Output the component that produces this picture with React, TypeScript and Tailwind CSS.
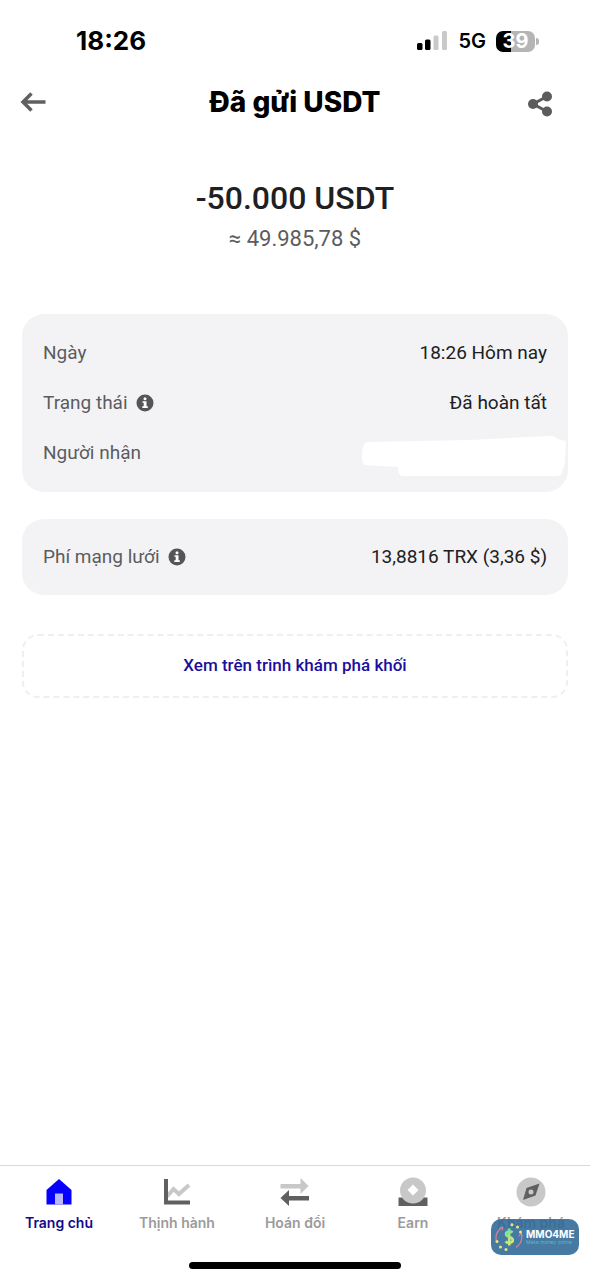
import { ReactNode } from 'react';

interface NavItem {
  label: string;
  icon: ReactNode;
  active?: boolean;
}

const navItems: NavItem[] = [
  {
    label: 'Trang chủ',
    active: true,
    icon: (
      <svg className="w-8 h-8" viewBox="0 0 32 32">
        <path d="M16 3 28.500 14v14.500h-25V14z" fill="#0500ff" />
        <path d="M12 17.500h8v11h-8z" fill="#b9b7fa" />
      </svg>
    ),
  },
  {
    label: 'Thịnh hành',
    icon: (
      <svg className="w-8 h-8" viewBox="0 0 32 32" fill="none">
        <path d="M6 20.500 12.500 13l5.500 5L28 9" stroke="#c8c8c8" strokeWidth="4" />
        <path d="M5 3v23.500h24" stroke="#606060" strokeWidth="4" />
      </svg>
    ),
  },
  {
    label: 'Hoán đổi',
    icon: (
      <svg className="w-8 h-8" viewBox="0 0 32 32">
        <path d="M1.500 8h20V2l8 8-8 8v-5.500h-20z" fill="#c8c8c8" />
        <path d="M30 20H10v-6l-8.500 8 8.500 8v-5.500h20z" fill="#606060" />
      </svg>
    ),
  },
  {
    label: 'Earn',
    icon: (
      <svg className="w-8 h-8" viewBox="0 0 32 32">
        <path d="M1.500 21.500h29V30h-29z" fill="#606060" />
        <circle cx="16" cy="14.500" r="13" fill="#c8c8c8" />
        <path d="m16 8.500 5.500 5.500-5.500 5.500-5.500-5.500z" fill="#fff" />
      </svg>
    ),
  },
  {
    label: 'Khám phá',
    icon: (
      <svg className="w-8 h-8" viewBox="0 0 32 32">
        <circle cx="16" cy="16" r="14.500" fill="#c8c8c8" />
        <path d="m24.500 7.500-4 12L8 24l3.500-12z" fill="#606060" />
        <circle cx="16" cy="16" r="2.500" fill="#c8c8c8" />
      </svg>
    ),
  },
];

function InfoButton({ label }: { label: string }) {
  return (
    <button type="button" aria-label={label} className="ml-2">
      <svg className="w-[18px] h-[18px]" viewBox="0 0 18 18">
        <circle cx="9" cy="9" r="8.500" fill="#555557" />
        <path d="M6.500 7.300h4v5h1.300v1.700H6.300v-1.700h1.400V8.800H6.500z" fill="#fff" />
        <circle cx="9" cy="4.800" r="1.500" fill="#fff" />
      </svg>
    </button>
  );
}

function Row({ label, info, children }: { label: string; info?: boolean; children: ReactNode }) {
  return (
    <div className="flex items-center justify-between h-[50px]">
      <dt className="flex items-center text-[#5c5c60]">
        {label}
        {info && <InfoButton label={label} />}
      </dt>
      <dd className="text-[#202022]">{children}</dd>
    </div>
  );
}

function StatusBar() {
  return (
    <div className="flex items-center justify-between h-[82px] pl-[76px] pr-[55px] font-['Inter',sans-serif]">
      <span className="text-[26px] leading-8 font-bold">18:26</span>
      <div className="flex items-center gap-[10px]">
        <svg className="w-[31px] h-5" viewBox="0 0 31 20">
          <rect x="0" y="12" width="5.500" height="7" rx="1.500" />
          <rect x="8" y="8.500" width="5.500" height="10.500" rx="1.500" />
          <rect x="16.500" y="4.500" width="5" height="14.500" rx="1.500" fill="#c9c9c9" />
          <rect x="25" y="0" width="5" height="19" rx="1.500" fill="#c9c9c9" />
        </svg>
        <span className="text-xl font-semibold">5G</span>
        <span className="relative flex items-center justify-center w-[39px] h-[21px] rounded-[7px] bg-linear-to-r from-black from-39% to-[#b5b5b5] to-39% text-white text-xl font-bold">
          39
          <span className="absolute -right-[4px] w-[3px] h-[7px] rounded-r-full bg-[#b5b5b5]" />
        </span>
      </div>
    </div>
  );
}

function Watermark() {
  return (
    <div className="absolute right-[11px] bottom-[25px] flex items-center w-[88px] h-9 pl-1 rounded-[10px] bg-[#2d6896]/88 font-['Inter',sans-serif]">
      <svg className="w-7 h-7 shrink-0" viewBox="0 0 28 28" fill="none">
        <path d="M7 4.500C2 8 0 13 1.500 18M21 24.500c5-3.500 6.500-9 5-14" stroke="#dc7d98" strokeWidth="1.200" />
        <path d="m4.500 5 3.500-1-1 3.500M24 13.500l2-4 1.500 3.500" stroke="#dc7d98" strokeWidth="1" />
        <g fill="#f3e47a">
          <circle cx="17" cy="1.800" r="1.500" />
          <circle cx="22.500" cy="4" r="1.500" />
          <circle cx="25.500" cy="9" r="1.500" />
          <circle cx="2" cy="18.500" r="1.500" />
          <circle cx="5.500" cy="24" r="1.500" />
          <circle cx="11" cy="26.500" r="1.500" />
        </g>
        <path
          d="M17.500 9.500C16 8 11 7.800 11 11c0 3.500 6.800 2.500 6.800 6 0 3.400-5.300 3.300-7.300 1.500M14.200 5.500v17"
          stroke="url(#coin)"
          strokeWidth="2.600"
        />
        <defs>
          <linearGradient id="coin" x1="11" y1="6" x2="18" y2="22" gradientUnits="userSpaceOnUse">
            <stop stopColor="#6ee0a0" />
            <stop offset="1" stopColor="#e6ec6a" />
          </linearGradient>
        </defs>
      </svg>
      <div className="ml-[3px] whitespace-nowrap">
        <div className="text-[10px] leading-[10px] font-bold text-white">MMO4ME</div>
        <div className="text-[5px] leading-[6px] text-[#62b5c4]">Make money online</div>
      </div>
    </div>
  );
}

export default function App() {
  return (
    <div className="relative flex flex-col min-h-screen bg-white text-black font-['Roboto',sans-serif]">
      <StatusBar />

      <header className="flex items-center justify-between h-10 px-5">
        <button type="button" aria-label="Quay lại" className="flex w-11">
          <svg className="w-[26px] h-5" viewBox="0 0 26 20" fill="none" stroke="#606060" strokeWidth="3.500">
            <path d="M25.500 10H3M11.500 1.500 3 10l8.500 8.500" />
          </svg>
        </button>
        <h1 className="font-['Inter',sans-serif] text-[28px] leading-9 font-extrabold">Đã gửi USDT</h1>
        <button type="button" aria-label="Chia sẻ" className="flex w-11 pt-1">
          <svg className="w-7 h-[26px]" viewBox="0 0 28 26" fill="#5c5c5c">
            <path d="M21 5.500 7 13l14 7.500" fill="none" stroke="#5c5c5c" strokeWidth="3" />
            <circle cx="7" cy="13" r="5" />
            <circle cx="21" cy="5.500" r="5" />
            <circle cx="21" cy="20.500" r="5" />
          </svg>
        </button>
      </header>

      <main className="px-[22px] pt-14">
        <div className="text-center">
          <p className="text-[32px] leading-10 font-medium text-[#202022]">-50.000 USDT</p>
          <p className="text-[22px] leading-[42px] text-[#5c5c60]">≈ 49.985,78 $</p>
        </div>

        <dl className="relative mt-[54px] px-[21px] py-[14px] rounded-[22px] bg-[#f3f3f5] text-[19px]">
          <Row label="Ngày">18:26 Hôm nay</Row>
          <Row label="Trạng thái" info>Đã hoàn tất</Row>
          <Row label="Người nhận">
            <svg className="absolute right-0 bottom-[14px] w-[208px] h-11" viewBox="0 0 208 44" fill="#fff">
              <path d="M7 8 110 6l78-4q7-1 9 3l9 2-1 22-3 10q-1 3-6 3H42q-4-1-4-9L5 31q-3-1-3-9 0-13 5-14z" />
            </svg>
          </Row>
        </dl>

        <dl className="mt-[27px] px-[21px] py-[13px] rounded-[22px] bg-[#f3f3f5] text-[19px]">
          <Row label="Phí mạng lưới" info>13,8816 TRX (3,36 $)</Row>
        </dl>

        <a
          href="#"
          className="flex items-center justify-center h-16 mt-[39px] rounded-2xl border-2 border-dashed border-[#efeff1] text-[17px] font-medium text-[#1a0f9c]"
        >
          Xem trên trình khám phá khối
        </a>
      </main>

      <nav className="grid grid-cols-5 mt-auto pt-[10px] border-t border-[#d9d9d9]">
        {navItems.map(item => (
          <a
            key={item.label}
            href="#"
            className={`flex flex-col items-center font-['Inter',sans-serif] text-sm font-semibold ${
              item.active ? 'text-[#140a8c]' : 'text-[#9b9b9b]'
            }`}
          >
            {item.icon}
            <span className="mt-[3px] leading-6">{item.label}</span>
          </a>
        ))}
      </nav>
      <div className="w-[212px] h-[7px] mx-auto mt-[27px] mb-[11px] rounded-full bg-black" />

      <Watermark />
    </div>
  );
}
